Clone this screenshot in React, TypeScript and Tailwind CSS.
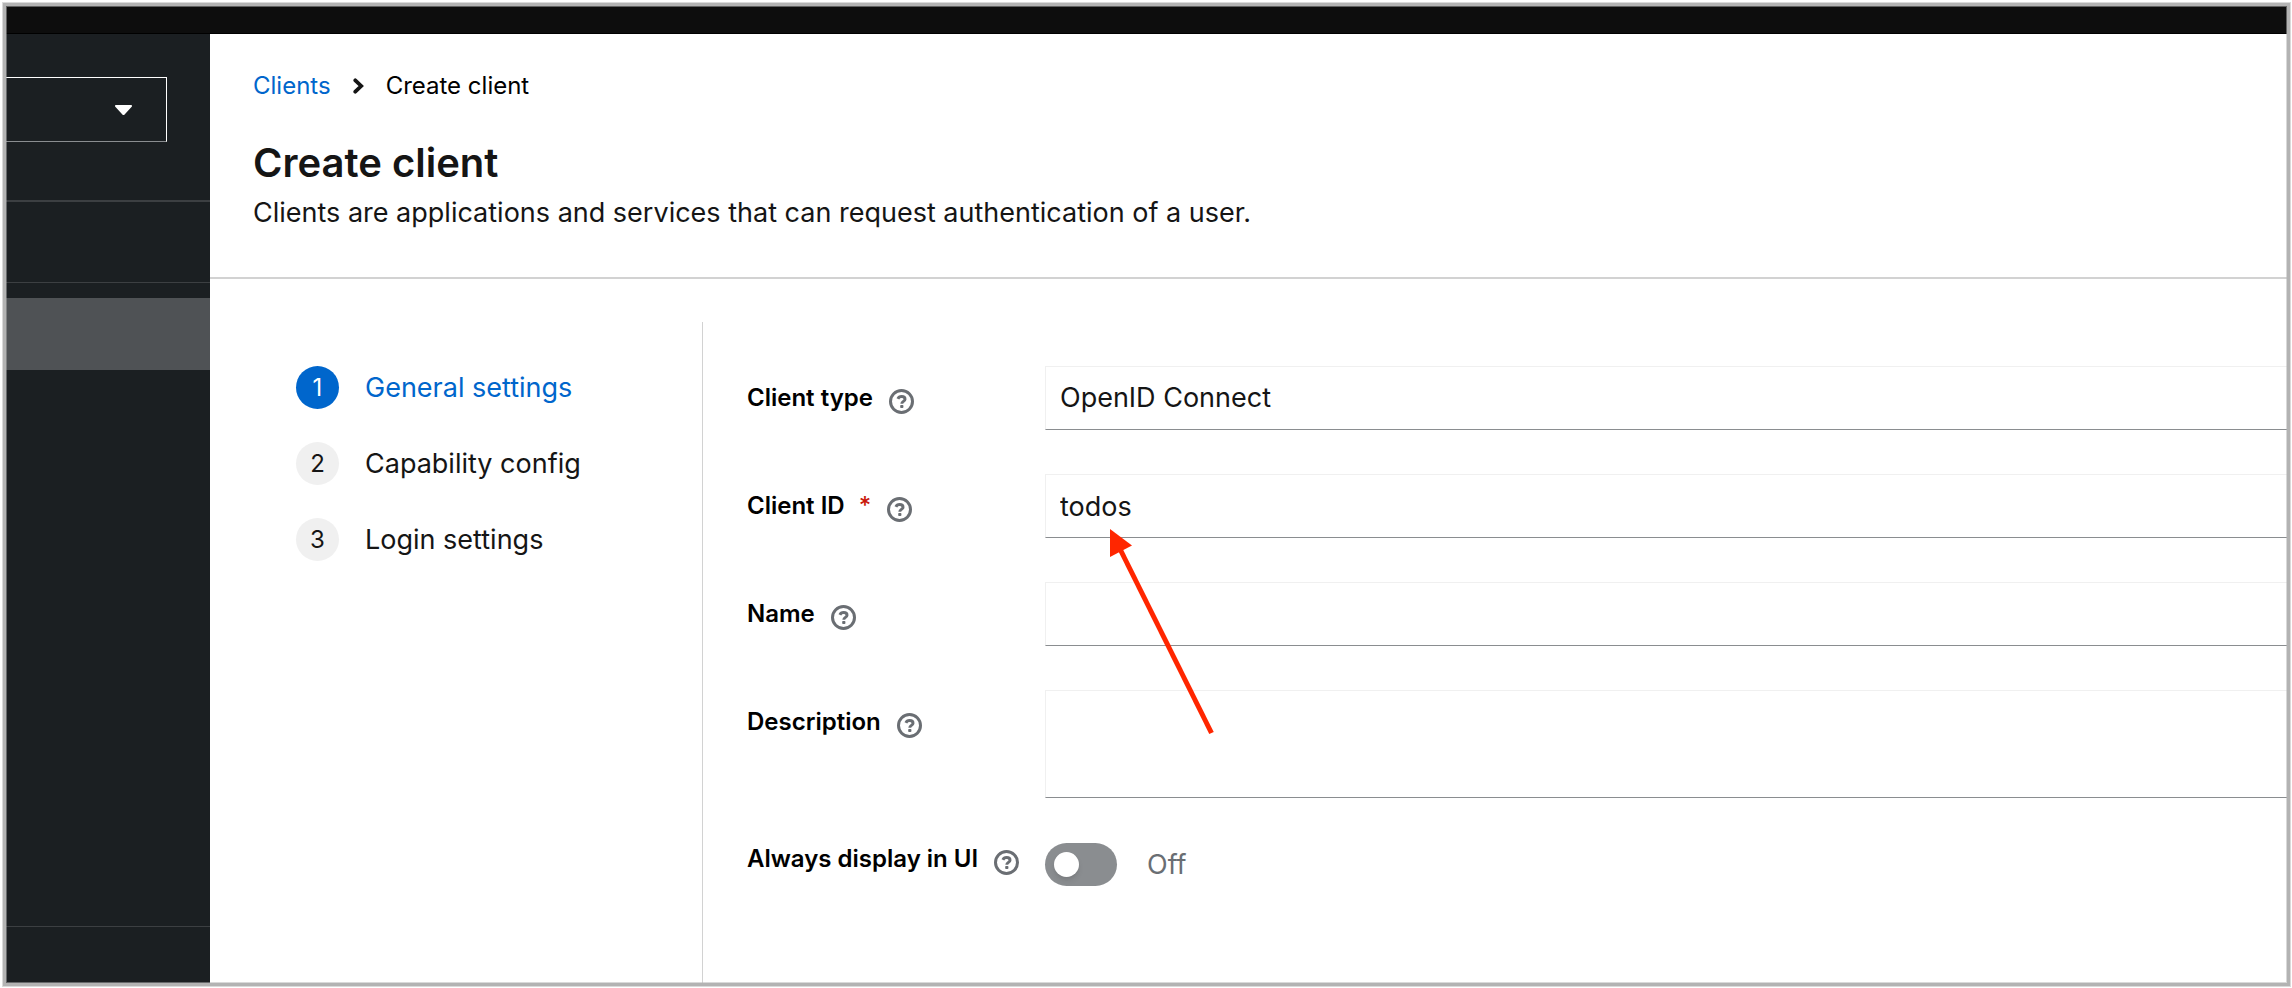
import { useState, type ReactNode } from 'react';

const steps = ['General settings', 'Capability config', 'Login settings'];

const fieldClass =
  'block w-full rounded-none border border-r-0 border-[#f0f0f0] border-b-[#8a8d90] bg-white pl-[14px] text-[27px] leading-10 text-[#151515] outline-none';

function HelpButton({ topic }: { topic: string }) {
  return (
    <button type="button" aria-label={`Help for ${topic}`} className="ml-4 shrink-0 text-[#6a6e73]">
      <svg viewBox="0 0 25 25" className="block size-[25px]" fill="none" stroke="currentColor" aria-hidden="true">
        <circle cx="12.5" cy="12.5" r="11" strokeWidth="3" />
        <path d="M8.900 9.900C9.600 8.300 10.900 7.600 12.600 7.600c2 0 3.400 1 3.400 2.600 0 2.200-3.200 2.200-3.200 4.500" strokeWidth="3" />
        <rect x="11.200" y="16" width="3.200" height="3" rx="0.800" fill="currentColor" stroke="none" />
      </svg>
    </button>
  );
}

interface RowProps {
  id: string;
  label: string;
  required?: boolean;
  compact?: boolean;
  children: ReactNode;
}

function Row({ id, label, required, compact, children }: RowProps) {
  return (
    <div className={`flex items-start ${compact ? 'pt-px' : ''}`}>
      <div className={`flex w-[298px] shrink-0 items-end ${compact ? '' : 'pt-4'}`}>
        <label htmlFor={id} className="whitespace-nowrap text-2xl font-semibold text-black">
          {label}
          {required && <span className="ml-[14px] font-medium text-[#c9190b]">*</span>}
        </label>
        <HelpButton topic={label} />
      </div>
      <div className="relative min-w-0 flex-1">{children}</div>
    </div>
  );
}

function Sidebar() {
  return (
    <aside className="flex w-[204px] shrink-0 flex-col bg-[#1b1f22]">
      <button
        type="button"
        aria-label="Select realm"
        className="mt-[43px] flex h-[65px] w-[161px] items-center justify-end border border-l-0 border-white border-b-[#8a8d90] pr-[34px]"
      >
        <svg viewBox="0 0 17 10" className="h-[10px] w-[17px] fill-white" aria-hidden="true">
          <path d="M1 0h15c.9 0 1.3 1 .7 1.7L9.600 9.400c-.6.7-1.600.7-2.200 0L.3 1.700C-.3 1 .1 0 1 0z" />
        </svg>
      </button>
      <div className="mt-[58px] h-0.5 bg-[#3c3f42]" />
      <div className="mt-20 h-px bg-[#3c3f42]" />
      <a href="#clients" aria-label="Clients" className="mt-[15px] h-[72px] bg-[#4f5255]" />
      <div className="flex-1" />
      <div className="mb-14 h-px bg-[#3c3f42]" />
    </aside>
  );
}

function Arrow() {
  return (
    <svg
      viewBox="0 0 110 210"
      className="pointer-events-none absolute left-[65px] top-[55px] z-10 h-[210px] w-[110px]"
      aria-hidden="true"
    >
      <path d="M10 20L101.500 204" stroke="#ff2600" strokeWidth="5" />
      <path d="M0 0L22 16.500L0 28z" fill="#ff2600" />
    </svg>
  );
}

export default function App() {
  const [clientId, setClientId] = useState('todos');
  const [always, setAlways] = useState(false);

  return (
    <div className="flex min-h-screen flex-col bg-white pb-px pl-0.5 pr-px pt-0.5 font-['Inter',sans-serif] text-[#151515]">
      <div className="flex flex-1 flex-col border border-[#dadada]">
        <div className="relative flex flex-1 flex-col border-3 border-[#b3b3b3]">
          <div className="pointer-events-none absolute inset-0 z-20 border border-[#b3b3b3]/50" />
          <header className="h-7 border-b border-black bg-[#0d0d0d]" />
          <div className="flex flex-1">
            <Sidebar />
            <main className="flex min-w-0 flex-1 flex-col">
              <section className="border-b-2 border-[#d2d2d2] pb-11 pl-[43px] pt-9">
                <nav aria-label="Breadcrumb" className="flex items-center text-2xl">
                  <a href="#clients" className="text-[#0066cc]">
                    Clients
                  </a>
                  <svg viewBox="0 0 11 16" className="mx-[22px] h-4 w-[11px]" fill="none" stroke="#151515" aria-hidden="true">
                    <path d="M2.300 2.300L8.200 8l-5.900 5.700" strokeWidth="3.800" strokeLinecap="round" strokeLinejoin="miter" />
                  </svg>
                  <span className="text-black">Create client</span>
                </nav>
                <h1 className="mt-[37px] text-[40px] font-semibold leading-[48px]">Create client</h1>
                <p className="mt-1.5 text-[27px] leading-10">
                  Clients are applications and services that can request authentication of a user.
                </p>
              </section>
              <div className="flex flex-1">
                <nav aria-label="Steps" className="mt-[43px] w-[493px] shrink-0 border-r border-[#d2d2d2]">
                  <ol className="flex flex-col gap-[33px] pl-[86px] pt-11">
                    {steps.map((step, i) => (
                      <li key={step}>
                        <button type="button" className="flex h-[43px] items-center gap-[26px] text-[27px] leading-10">
                          <span
                            className={`flex size-[43px] items-center justify-center rounded-full text-2xl ${
                              i === 0 ? 'bg-[#0066cc] text-white' : 'bg-[#f0f0f0]'
                            }`}
                          >
                            {i + 1}
                          </span>
                          <span className={i === 0 ? 'text-[#0066cc]' : ''}>{step}</span>
                        </button>
                      </li>
                    ))}
                  </ol>
                </nav>
                <form className="flex min-w-0 flex-1 flex-col gap-11 pl-11 pt-[87px]">
                  <Row id="client-type" label="Client type">
                    <select id="client-type" className={`${fieldClass} h-16 appearance-none`}>
                      <option>OpenID Connect</option>
                      <option>SAML</option>
                    </select>
                  </Row>
                  <Row id="client-id" label="Client ID" required>
                    <input
                      id="client-id"
                      type="text"
                      value={clientId}
                      onChange={(e) => setClientId(e.target.value)}
                      className={`${fieldClass} h-16`}
                    />
                    <Arrow />
                  </Row>
                  <Row id="name" label="Name">
                    <input id="name" type="text" className={`${fieldClass} h-16`} />
                  </Row>
                  <Row id="description" label="Description">
                    <textarea id="description" className={`${fieldClass} h-[108px] resize-none`} />
                  </Row>
                  <Row id="always-display" label="Always display in UI" compact>
                    <div className="flex items-center gap-[30px]">
                      <span className="relative h-[43px] w-[72px]">
                        <input
                          id="always-display"
                          type="checkbox"
                          role="switch"
                          checked={always}
                          onChange={(e) => setAlways(e.target.checked)}
                          className="peer block h-full w-full cursor-pointer appearance-none rounded-full bg-[#8a8d90] checked:bg-[#0066cc]"
                        />
                        <span className="pointer-events-none absolute left-[9px] top-[9px] size-[25px] rounded-full bg-white shadow-md peer-checked:left-[38px]" />
                      </span>
                      <span className="text-[27px] leading-10 text-[#6a6e73]">{always ? 'On' : 'Off'}</span>
                    </div>
                  </Row>
                </form>
              </div>
            </main>
          </div>
        </div>
      </div>
    </div>
  );
}
